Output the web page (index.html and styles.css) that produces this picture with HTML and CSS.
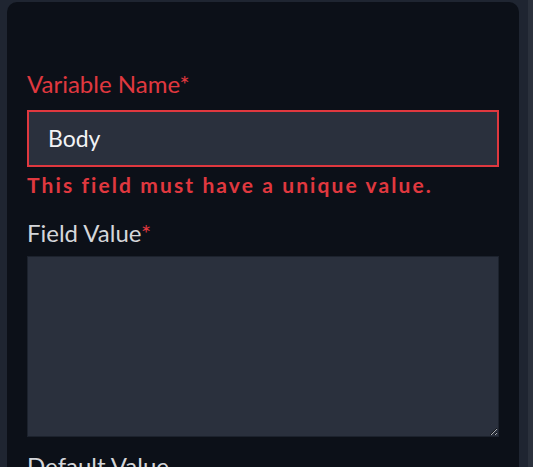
FILE: index.html
```html
<!DOCTYPE html>
<html>
<head>
<meta charset="utf-8">
<link rel="stylesheet" href="styles.css">
</head>
<body>
<div class="page">
  <div class="panel">
    <div class="label label-error">Variable Name<span class="req">*</span></div>
    <div class="input input-error">Body</div>
    <div class="error-msg">This field must have a unique value.</div>
    <div class="label label-field">Field Value<span class="req">*</span></div>
    <textarea class="textarea"></textarea>
    <div class="label label-next">Default Value</div>
  </div>
  <div class="gutter"><div class="scrollbar"></div></div>
</div>
</body>
</html>
```
FILE: styles.css
```css
html, body {
  margin: 0;
  padding: 0;
  background: #1f2531;
  overflow: hidden;
}
.page {
  display: flex;
  height: 467px;
  width: 533px;
  font-family: Lato, "Open Sans", sans-serif;
}
.panel {
  margin: 2px 0 0 7px;
  width: 512px;
  box-sizing: border-box;
  padding: 68px 20px 0 20px;
  background: #0c1018;
  border-radius: 10px 10px 0 0;
  display: flex;
  flex-direction: column;
}
.panel > * {
  flex-shrink: 0;
}
.gutter {
  flex: 1;
  display: flex;
  justify-content: flex-end;
}
.scrollbar {
  width: 5px;
  background: #2b313c;
}
.label {
  font-size: 24px;
  line-height: 28px;
  color: #d4d6da;
}
.label-error {
  color: #e0383f;
}
.req {
  color: #e0383f;
}
.input {
  margin-top: 12px;
  height: 57px;
  box-sizing: border-box;
  border: 2px solid #e0383f;
  background: #2a303d;
  padding-left: 19px;
  display: flex;
  align-items: center;
  font-size: 23px;
  color: #f2f3f5;
  padding-bottom: 2px;
}
.error-msg {
  margin-top: 5px;
  font-size: 21px;
  line-height: 25px;
  font-weight: 700;
  letter-spacing: 2.1px;
  color: #e0383f;
}
.label-field {
  margin-top: 22px;
}
.textarea {
  margin: 9px 0 0 0;
  display: block;
  width: 472px;
  height: 181px;
  box-sizing: border-box;
  background: #2a303d;
  border: 1px solid #1c222d;
  border-radius: 0;
  resize: vertical;
  outline: none;
  color-scheme: dark;
  font-family: Lato, sans-serif;
}
.label-next {
  margin-top: 15px;
}
```
